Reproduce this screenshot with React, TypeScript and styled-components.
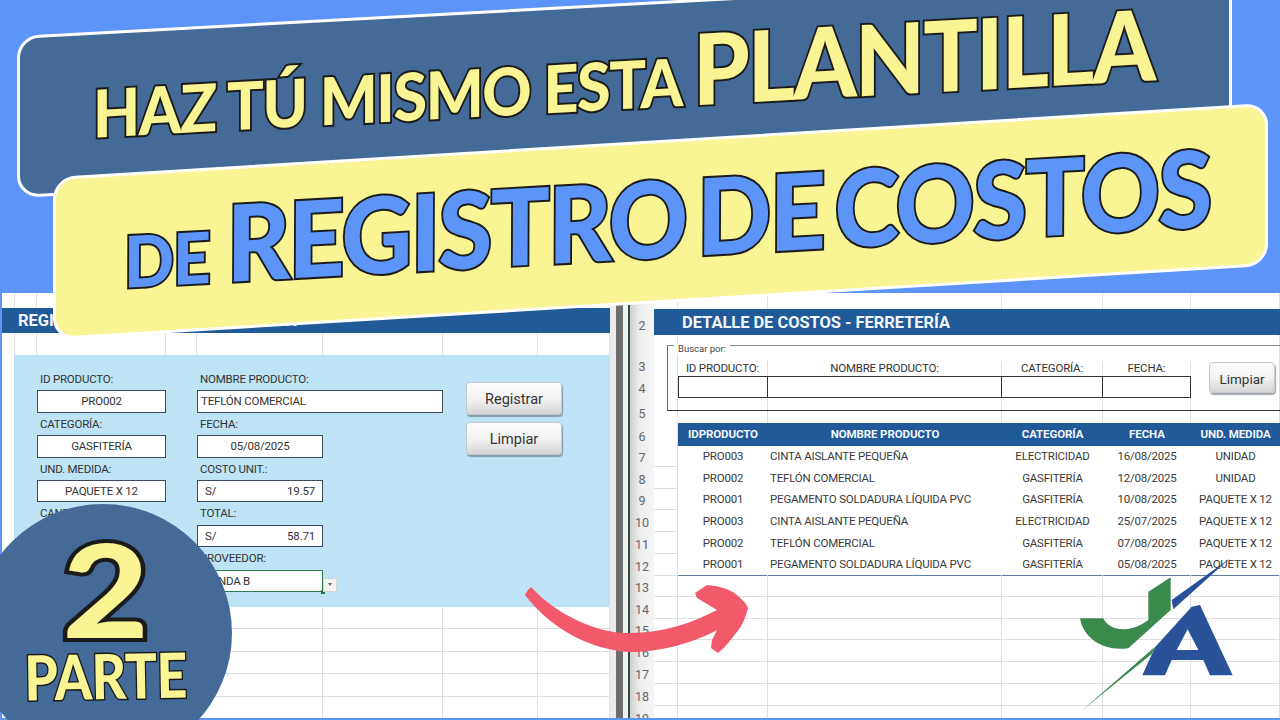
import * as React from 'react';
import styled, { createGlobalStyle } from 'styled-components';

const GRID = '#dcdfe3';
const BAND = '#215a99';
const YELLOW = '#f9f594';
const SKY = '#5c94f8';
const SLATE = '#446a98';
const CELL_FONT = `Roboto, 'Liberation Sans', sans-serif`;
const TITLE_FONT = `Lato, 'Open Sans', sans-serif`;

const GlobalStyle = createGlobalStyle`
  html, body { margin: 0; padding: 0; background: ${SKY}; }
  * { box-sizing: border-box; }
`;

const Page = styled.div`
  position: relative;
  width: 1280px;
  height: 720px;
  overflow: hidden;
  background: ${SKY};
  padding: 293px 0 2px 2px;
  display: flex;
  font-family: ${CELL_FONT};
  color: #333;
`;

/* ---------- left sheet ---------- */

const LeftSheet = styled.div`
  width: 608px;
  height: 425px;
  background: #fff;
  overflow: hidden;
  flex: none;
`;

const LeftRow = styled.div<{ $h: number }>`
  display: grid;
  grid-template-columns: 13px 22px 129px 31px 126px 120px 95px 72px;
  height: ${({ $h }) => $h}px;
`;

const GridCell = styled.div<{ $bottom?: boolean }>`
  border-right: 1px solid ${GRID};
  border-bottom: ${({ $bottom }) => ($bottom ? `1px solid ${GRID}` : 'none')};
`;

const TitleBand = styled.div<{ $indent: number }>`
  height: 25px;
  background: ${BAND};
  color: #f2f7fb;
  font-weight: 700;
  font-size: 16.5px;
  letter-spacing: -0.05px;
  line-height: 26px;
  padding-left: ${({ $indent }) => $indent}px;
  white-space: nowrap;
`;

const FormPanel = styled.div`
  margin-left: 12px;
  height: 252px;
  background: #bde3f4;
  padding: 13px 0 0 23px;
`;

const FormGrid = styled.div`
  display: grid;
  grid-template-columns: 129px 31px 126px 120px 23px 96px;
  grid-template-rows: repeat(10, 22.4px);
`;

const FieldLabel = styled.div<{ $col: number }>`
  grid-column: ${({ $col }) => $col};
  font-size: 11.5px;
  letter-spacing: -0.2px;
  line-height: 22.4px;
  padding-left: 3px;
  white-space: nowrap;
`;

const FieldBox = styled.div<{ $col: number; $span?: number; $left?: boolean }>`
  grid-column: ${({ $col }) => $col} / span ${({ $span }) => $span ?? 1};
  background: #fff;
  border: 1px solid #3d4a5c;
  font-size: 11.5px;
  letter-spacing: -0.2px;
  line-height: 20.4px;
  text-align: ${({ $left }) => ($left ? 'left' : 'center')};
  padding-left: ${({ $left }) => ($left ? 3 : 0)}px;
  white-space: nowrap;
`;

const MoneyBox = styled(FieldBox)`
  display: flex;
  justify-content: space-between;
  padding: 0 7px;
`;

const SelectedBox = styled(FieldBox)`
  position: relative;
  border: 1px solid #2a7d4f;
  padding-left: 4px;
`;

const FillHandle = styled.span`
  position: absolute;
  right: -3px;
  bottom: -3px;
  width: 4px;
  height: 4px;
  background: #1f7a45;
`;

const DropButton = styled.span`
  position: absolute;
  left: 100%;
  top: 7px;
  margin-left: 1px;
  width: 14px;
  height: 14px;
  background: #f3f3f3;
  border: 1px solid #d5d5d5;
  display: flex;
  align-items: center;
  justify-content: center;
  &::after {
    content: '';
    border-left: 2.5px solid transparent;
    border-right: 2.5px solid transparent;
    border-top: 3px solid #666;
  }
`;

const ButtonStack = styled.div`
  grid-column: 6;
  grid-row: 1 / span 6;
  display: flex;
  flex-direction: column;
  gap: 7px;
  padding-top: 14px;
`;

const SheetButton = styled.div<{ $w?: number; $h?: number; $font?: number }>`
  width: ${({ $w }) => $w ?? 96}px;
  height: ${({ $h }) => $h ?? 33}px;
  border-radius: 4px;
  background: linear-gradient(180deg, #fdfdfd 0%, #f1f1f1 55%, #d4d4d4 100%);
  border: 1px solid #c4c8cc;
  box-shadow: 1px 2px 1px rgba(90, 100, 110, 0.55);
  font-size: ${({ $font }) => $font ?? 14.5}px;
  color: #333;
  padding-top: 2px;
  display: flex;
  align-items: center;
  justify-content: center;
`;

/* ---------- splitter ---------- */

const Splitter = styled.div`
  width: 20px;
  height: 425px;
  flex: none;
  background: linear-gradient(
    90deg,
    #ebebeb 0 6px,
    #6e6e6e 6px 13px,
    #f2f2f2 13px 18px,
    #2f4d3c 18px 20px
  );
`;

/* ---------- right sheet ---------- */

const RightSheet = styled.div`
  position: relative;
  flex: 1;
  height: 425px;
  background: #fff;
  overflow: hidden;
`;

const RightRow = styled.div<{ $h: number }>`
  display: grid;
  grid-template-columns: 24px 24px 90px 234px 101px 88px 89px;
  height: ${({ $h }) => $h}px;
`;

const RowNum = styled.div`
  background: linear-gradient(90deg, #cfcfcf 0%, #efefef 45%, #f5f5f5 100%);
  color: #666;
  font-size: 12.5px;
  display: flex;
  align-items: flex-end;
  justify-content: center;
  padding-bottom: 2px;
`;

const BandCell = styled(TitleBand)`
  grid-column: 2 / -1;
  height: 26px;
  line-height: 28px;
`;

const SearchLabel = styled.div`
  font-size: 11.5px;
  letter-spacing: -0.2px;
  text-align: center;
  align-self: end;
  padding-bottom: 1px;
  border-right: 1px solid ${GRID};
`;

const SearchBox = styled.div`
  border: 1px solid #333;
  border-left-width: 0;
  &:nth-child(3) {
    border-left-width: 1px;
  }
`;

const TableHead = styled.div`
  background: ${BAND};
  color: #f2f7fb;
  font-weight: 700;
  font-size: 11.5px;
  letter-spacing: -0.1px;
  line-height: 23px;
  text-align: center;
  white-space: nowrap;
`;

const DataCell = styled.div<{ $left?: boolean; $last?: boolean }>`
  font-size: 11.5px;
  letter-spacing: -0.2px;
  line-height: 22px;
  text-align: ${({ $left }) => ($left ? 'left' : 'center')};
  padding-left: ${({ $left }) => ($left ? 2 : 0)}px;
  white-space: nowrap;
  color: #3a3a3a;
  border-bottom: ${({ $last }) => ($last ? '1px solid #5d7f9f' : 'none')};
`;

const GroupBox = styled.div`
  position: absolute;
  left: 37px;
  top: 52px;
  width: 640px;
  height: 66px;
  border: 1px solid #8a8a8a;
  border-bottom-color: #333;
  border-left-color: #666;
`;

const GroupLegend = styled.span`
  position: absolute;
  left: 6px;
  top: -3px;
  padding: 0 4px;
  background: #fff;
  font-size: 9.5px;
  line-height: 11px;
  color: #444;
`;

const OverlayButton = styled(SheetButton)`
  position: absolute;
  left: 579px;
  top: 69px;
`;

/* ---------- thumbnail overlays ---------- */

const TopBanner = styled.div`
  position: absolute;
  left: 17px;
  top: 3px;
  width: 1215px;
  height: 162px;
  background: ${SLATE};
  border: 3px solid #fff;
  border-radius: 22px;
  transform: skewY(-3.1deg);
  padding: 16px 0 0 73px;
`;

const BottomBanner = styled.div`
  position: absolute;
  left: 53px;
  top: 140px;
  width: 1215px;
  height: 163px;
  background: ${YELLOW};
  border: 3px solid #fff;
  border-radius: 22px;
  transform: skewY(-3.5deg);
  padding: 18px 0 0 68px;
`;

const HeadLine = styled.div<{ $gap: number; $squeeze: number; $tilt?: number }>`
  display: flex;
  align-items: baseline;
  gap: ${({ $gap }) => $gap}px;
  white-space: nowrap;
  font-family: ${TITLE_FONT};
  font-weight: 900;
  line-height: 1;
  transform-origin: left bottom;
  transform: scaleX(${({ $squeeze }) => $squeeze}) rotate(${({ $tilt }) => $tilt ?? 0}deg);
`;

const Outlined = styled.span<{ $size: number; $fill: string; $spacing: number; $words?: number }>`
  font-size: ${({ $size }) => $size}px;
  letter-spacing: ${({ $spacing }) => $spacing}px;
  word-spacing: ${({ $words }) => $words ?? 0}px;
  color: ${({ $fill }) => $fill};
  -webkit-text-stroke: 4px #1b1b1b;
  paint-order: stroke fill;
`;

const PartBadge = styled.div`
  position: absolute;
  left: -26px;
  top: 504px;
  width: 258px;
  height: 258px;
  border-radius: 50%;
  background: ${SLATE};
  display: flex;
  flex-direction: column;
  align-items: center;
  font-family: ${TITLE_FONT};
  font-weight: 900;
  line-height: 1;
`;

const BadgeDigit = styled(Outlined)`
  -webkit-text-stroke: 8px #1b1b1b;
  margin: 19px 0 0 6px;
  height: 121px;
  transform: scaleX(1.15);
`;

const BadgeWord = styled(Outlined)`
  -webkit-text-stroke: 3px #1b1b1b;
  margin-left: 6px;
  transform: rotate(-1deg) scaleX(0.86);
`;

const ArrowArt = styled.svg`
  position: absolute;
  left: 500px;
  top: 560px;
`;

const LogoArt = styled.svg`
  position: absolute;
  left: 1040px;
  top: 550px;
`;

const leftRows = [22.4, 22.4, 22.4, 22.4, 22.4, 22.4];
const leftColumns = Array.from({ length: 8 });
const rightColumns = Array.from({ length: 6 });

const tableRows = [
  ['PRO003', 'CINTA AISLANTE PEQUEÑA', 'ELECTRICIDAD', '16/08/2025', 'UNIDAD'],
  ['PRO002', 'TEFLÓN COMERCIAL', 'GASFITERÍA', '12/08/2025', 'UNIDAD'],
  ['PRO001', 'PEGAMENTO SOLDADURA LÍQUIDA PVC', 'GASFITERÍA', '10/08/2025', 'PAQUETE X 12'],
  ['PRO003', 'CINTA AISLANTE PEQUEÑA', 'ELECTRICIDAD', '25/07/2025', 'PAQUETE X 12'],
  ['PRO002', 'TEFLÓN COMERCIAL', 'GASFITERÍA', '07/08/2025', 'PAQUETE X 12'],
  ['PRO001', 'PEGAMENTO SOLDADURA LÍQUIDA PVC', 'GASFITERÍA', '05/08/2025', 'PAQUETE X 12'],
];

const emptyRightRows = [13, 14, 15, 16, 17, 18, 19];

const App = () => (
  <Page>
    <GlobalStyle />

    <LeftSheet>
      <LeftRow $h={15}>
        {leftColumns.map((_, i) => (
          <GridCell key={i} />
        ))}
      </LeftRow>
      <TitleBand $indent={16}>REGISTRO DE COSTOS - FERRETERÍA</TitleBand>
      <LeftRow $h={22}>
        {leftColumns.map((_, i) => (
          <GridCell key={i} />
        ))}
      </LeftRow>
      <FormPanel>
        <FormGrid>
          <FieldLabel $col={1}>ID PRODUCTO:</FieldLabel>
          <FieldLabel $col={3}>NOMBRE PRODUCTO:</FieldLabel>
          <ButtonStack>
            <SheetButton>Registrar</SheetButton>
            <SheetButton>Limpiar</SheetButton>
          </ButtonStack>
          <FieldBox $col={1}>PRO002</FieldBox>
          <FieldBox $col={3} $span={2} $left>
            TEFLÓN COMERCIAL
          </FieldBox>
          <FieldLabel $col={1}>CATEGORÍA:</FieldLabel>
          <FieldLabel $col={3}>FECHA:</FieldLabel>
          <FieldBox $col={1}>GASFITERÍA</FieldBox>
          <FieldBox $col={3}>05/08/2025</FieldBox>
          <FieldLabel $col={1}>UND. MEDIDA:</FieldLabel>
          <FieldLabel $col={3}>COSTO UNIT.:</FieldLabel>
          <FieldBox $col={1}>PAQUETE X 12</FieldBox>
          <MoneyBox $col={3}>
            <span>S/</span>
            <span>19.57</span>
          </MoneyBox>
          <FieldLabel $col={1}>CANTIDAD:</FieldLabel>
          <FieldLabel $col={3}>TOTAL:</FieldLabel>
          <FieldBox $col={1}>3</FieldBox>
          <MoneyBox $col={3}>
            <span>S/</span>
            <span>58.71</span>
          </MoneyBox>
          <FieldLabel $col={3}>PROVEEDOR:</FieldLabel>
          <SelectedBox $col={3} $left>
            TIENDA B
            <FillHandle />
            <DropButton />
          </SelectedBox>
        </FormGrid>
      </FormPanel>
      {leftRows.map((h, r) => (
        <LeftRow $h={h} key={r}>
          {leftColumns.map((_, i) => (
            <GridCell key={i} $bottom={i > 0} />
          ))}
        </LeftRow>
      ))}
    </LeftSheet>

    <Splitter />

    <RightSheet>
      <RightRow $h={16}>
        <RowNum />
        {rightColumns.map((_, i) => (
          <GridCell key={i} />
        ))}
      </RightRow>
      <RightRow $h={26}>
        <RowNum>2</RowNum>
        <BandCell $indent={28}>DETALLE DE COSTOS - FERRETERÍA</BandCell>
      </RightRow>
      <RightRow $h={41}>
        <RowNum>3</RowNum>
        <GridCell />
        <SearchLabel>ID PRODUCTO:</SearchLabel>
        <SearchLabel>NOMBRE PRODUCTO:</SearchLabel>
        <SearchLabel>CATEGORÍA:</SearchLabel>
        <SearchLabel>FECHA:</SearchLabel>
        <GridCell />
      </RightRow>
      <RightRow $h={22}>
        <RowNum>4</RowNum>
        <GridCell />
        <SearchBox />
        <SearchBox />
        <SearchBox />
        <SearchBox />
        <GridCell />
      </RightRow>
      <RightRow $h={25}>
        <RowNum>5</RowNum>
        {rightColumns.map((_, i) => (
          <GridCell key={i} />
        ))}
      </RightRow>
      <RightRow $h={22}>
        <RowNum>6</RowNum>
        <GridCell />
        <TableHead>IDPRODUCTO</TableHead>
        <TableHead>NOMBRE PRODUCTO</TableHead>
        <TableHead>CATEGORÍA</TableHead>
        <TableHead>FECHA</TableHead>
        <TableHead>UND. MEDIDA</TableHead>
      </RightRow>
      {tableRows.map((row, r) => (
        <RightRow $h={21.67} key={r}>
          <RowNum>{r + 7}</RowNum>
          <GridCell $bottom />
          {row.map((text, c) => (
            <DataCell key={c} $left={c === 1} $last={r === tableRows.length - 1}>
              {text}
            </DataCell>
          ))}
        </RightRow>
      ))}
      {emptyRightRows.map((n) => (
        <RightRow $h={21.8} key={n}>
          <RowNum>{n}</RowNum>
          {rightColumns.map((_, i) => (
            <GridCell key={i} $bottom />
          ))}
        </RightRow>
      ))}
      <GroupBox>
        <GroupLegend>Buscar por:</GroupLegend>
      </GroupBox>
      <OverlayButton $w={66} $h={31} $font={13.5}>
        Limpiar
      </OverlayButton>
    </RightSheet>

    <TopBanner>
      <HeadLine $gap={12} $squeeze={0.924}>
        <Outlined $size={66} $fill={YELLOW} $spacing={-1.5}>
          HAZ TÚ MISMO ESTA
        </Outlined>
        <Outlined $size={98} $fill={YELLOW} $spacing={-2}>
          PLANTILLA
        </Outlined>
      </HeadLine>
    </TopBanner>

    <BottomBanner>
      <HeadLine $gap={18} $squeeze={0.925} $tilt={0.25}>
        <Outlined $size={71} $fill={SKY} $spacing={-1}>
          DE
        </Outlined>
        <Outlined $size={106} $fill={SKY} $spacing={-2} $words={-12}>
          REGISTRO DE COSTOS
        </Outlined>
      </HeadLine>
    </BottomBanner>

    <PartBadge>
      <BadgeDigit $size={130} $fill={YELLOW} $spacing={0}>
        2
      </BadgeDigit>
      <BadgeWord $size={62} $fill={YELLOW} $spacing={-0.5}>
        PARTE
      </BadgeWord>
    </PartBadge>

    <ArrowArt width="280" height="160" viewBox="0 0 280 160">
      <path
        fill="#f2596b"
        d="M25 35 L28 30 L31 27 L38 34 C60 55 95 72 125 73 C160 74 190 64 217 50 L197 38 L195 33 L207 25 C218 26 228 29 233 32 C241 38 246 43 248 48 C246 56 243 63 240 68 C232 78 226 87 218 93 L211 88 L212 80 L217 70 C190 85 155 92 130 92 C90 90 50 68 25 35 Z"
      />
    </ArrowArt>

    <LogoArt width="240" height="170" viewBox="0 0 720 510">
      <path
        fill="#3b8a4d"
        d="M120 205 L190 205 C205 240 265 255 325 210 L325 125 L392 82 L392 180 L265 295 C190 305 130 265 120 205 Z"
      />
      <path fill="#2a5298" d="M395 150 L570 25 L400 178 Z" />
      <path
        fill="#2a5298"
        fillRule="evenodd"
        d="M455 170 L480 165 L578 376 L510 376 L490 330 L395 330 L375 376 L307 376 L345 292 Z M410 300 L475 300 L443 238 Z"
      />
      <path fill="#3b8a4d" d="M345 290 L125 482 L335 312 Z" />
    </LogoArt>
  </Page>
);

export default App;
